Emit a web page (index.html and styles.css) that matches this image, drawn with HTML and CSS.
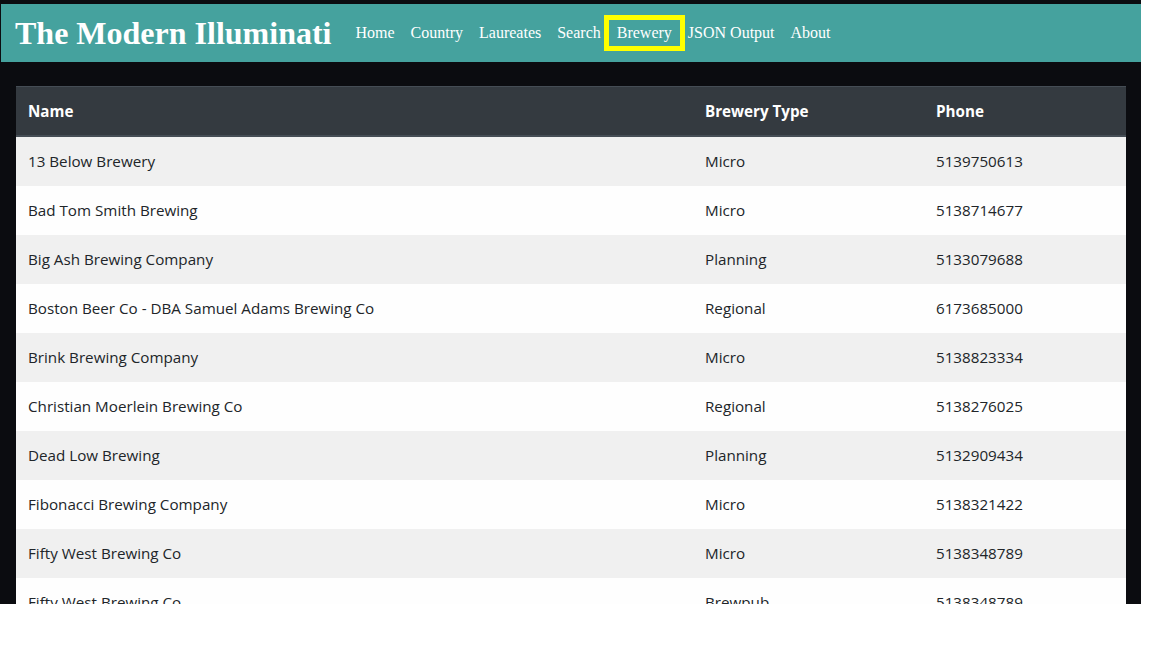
FILE: index.html
```html
<!DOCTYPE html>
<html lang="en">
<head>
<meta charset="utf-8">
<title>The Modern Illuminati - Brewery</title>
<link rel="stylesheet" href="styles.css">
</head>
<body>
<div class="frame">
  <nav class="navbar">
    <span class="brand">The Modern Illuminati</span>
    <a class="nav-link" href="#">Home</a>
    <a class="nav-link" href="#">Country</a>
    <a class="nav-link" href="#">Laureates</a>
    <a class="nav-link" href="#">Search</a>
    <a class="nav-link active" href="#">Brewery</a>
    <a class="nav-link" href="#">JSON Output</a>
    <a class="nav-link" href="#">About</a>
  </nav>
  <main class="content">
    <table class="brew-table">
      <colgroup>
        <col class="col-name">
        <col class="col-type">
        <col class="col-phone">
      </colgroup>
      <thead>
        <tr><th>Name</th><th>Brewery Type</th><th>Phone</th></tr>
      </thead>
      <tbody>
        <tr><td>13 Below Brewery</td><td>Micro</td><td>5139750613</td></tr>
        <tr><td>Bad Tom Smith Brewing</td><td>Micro</td><td>5138714677</td></tr>
        <tr><td>Big Ash Brewing Company</td><td>Planning</td><td>5133079688</td></tr>
        <tr><td>Boston Beer Co - DBA Samuel Adams Brewing Co</td><td>Regional</td><td>6173685000</td></tr>
        <tr><td>Brink Brewing Company</td><td>Micro</td><td>5138823334</td></tr>
        <tr><td>Christian Moerlein Brewing Co</td><td>Regional</td><td>5138276025</td></tr>
        <tr><td>Dead Low Brewing</td><td>Planning</td><td>5132909434</td></tr>
        <tr><td>Fibonacci Brewing Company</td><td>Micro</td><td>5138321422</td></tr>
        <tr><td>Fifty West Brewing Co</td><td>Micro</td><td>5138348789</td></tr>
        <tr><td>Fifty West Brewing Co</td><td>Brewpub</td><td>5138348789</td></tr>
        <tr><td>Fifty West Brewing Co</td><td>Micro</td><td>5138348789</td></tr>
      </tbody>
    </table>
  </main>
</div>
</body>
</html>
```

FILE: styles.css
```css
html, body {
  margin: 0;
  padding: 0;
  background: #ffffff;
}

.frame {
  width: 1141px;
  height: 604px;
  overflow: hidden;
  background: #0b0c10;
  padding: 4px 0 0 1px;
  box-sizing: border-box;
}

.navbar {
  display: flex;
  align-items: center;
  height: 58px;
  background: #45a29e;
  padding-left: 14px;
  font-family: "Liberation Serif", "Times New Roman", serif;
}

.brand {
  color: #ffffff;
  font-size: 32px;
  font-weight: bold;
  margin-right: 16px;
  white-space: nowrap;
}

.nav-link {
  color: #ffffff;
  text-decoration: none;
  font-size: 16px;
  padding: 4px 8px;
  line-height: 18px;
  white-space: nowrap;
}

.nav-link.active {
  outline: 5px solid #ffff00;
}

.content {
  padding: 24px 15px 0 15px;
}

.brew-table {
  width: 1110px;
  border-collapse: collapse;
  font-family: "Open Sans", "Noto Sans", sans-serif;
  font-size: 15.2px;
  color: #212529;
  background: #fefefe;
}

.col-name { width: 677px; }
.col-type { width: 231px; }
.col-phone { width: 202px; }

.brew-table th,
.brew-table td {
  text-align: left;
  padding: 12px;
  line-height: 24px;
  vertical-align: top;
}

.brew-table th {
  background: #343a40;
  color: #ffffff;
  font-weight: bold;
  border-top: 1px solid #454d55;
  border-bottom: 2px solid #454d55;
}

.brew-table td {
  border-top: 1px solid transparent;
}

.brew-table tbody tr:nth-child(odd) td {
  background: #f0f0f0;
}
```
